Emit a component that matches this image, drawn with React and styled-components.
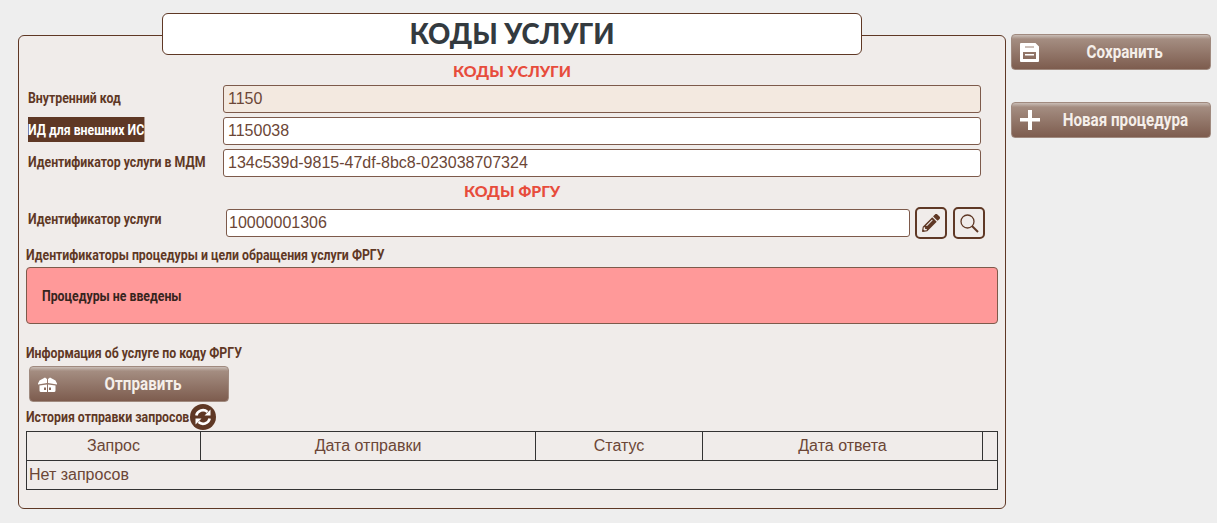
import React from "react";
import styled, { createGlobalStyle, css } from "styled-components";
import { FaPencilAlt } from "react-icons/fa";

const brown = "#5f3825";

// the page uses a condensed bold face, so Roboto gets squeezed to its width
const condensed = css`
  font: 700 15px/18px Roboto, "Liberation Sans", sans-serif;
  transform: scaleX(0.82);
  transform-origin: left center;
  white-space: nowrap;
`;

const GlobalStyle = createGlobalStyle`
  html, body {
    margin: 0;
    background: #eeeeee;
    font-family: "Liberation Sans", Arial, sans-serif;
  }
`;

const Page = styled.div`
  display: flex;
  align-items: flex-start;
  gap: 5px;
  padding: 13px 0 0 18px;
`;

const Panel = styled.section`
  box-sizing: border-box;
  width: 988px;
  height: 474px;
  margin-top: 22px;
  padding: 0 7px 0 7px;
  background: #f0ecea;
  border: 1px solid ${brown};
  border-radius: 6px;
`;

const Title = styled.h1`
  box-sizing: border-box;
  width: 700px;
  height: 42px;
  margin: -23px 0 0 136px;
  background: #fff;
  border: 1px solid ${brown};
  border-radius: 6px;
  color: #333a3f;
  font: 900 27.5px/40px Lato, sans-serif;
  text-align: center;
`;

const SectionHead = styled.h2`
  margin: ${(p) => p.$top}px 0 5px;
  color: #e74c3c;
  font: 900 15.8px/18px Lato, sans-serif;
  text-align: center;
`;

const FieldRow = styled.div`
  display: grid;
  grid-template-columns: 195px 758px;
  margin: 4px 0 0 2px;
`;

const FieldLabel = styled.label`
  ${condensed}
  justify-self: start;
  align-self: start;
  padding: ${(p) => (p.$active ? "3.5px 0" : "0")};
  margin-top: ${(p) => (p.$active ? "0" : "4px")};
  background: ${(p) => (p.$active ? brown : "transparent")};
  color: ${(p) => (p.$active ? "#fff" : brown)};
`;

const TextBox = styled.div`
  box-sizing: border-box;
  height: 28px;
  padding-left: 4px;
  background: ${(p) => (p.$readonly ? "#f3e9e0" : "#fff")};
  border: 1px solid #7d5a4b;
  border-radius: 3px;
  color: #6b4636;
  font-size: 16px;
  line-height: 26px;
`;

const FrguRow = styled.div`
  display: grid;
  grid-template-columns: 198px 684px 37px 39px;
  align-items: center;
  height: 32px;
  margin: 7px 0 0 2px;
`;

const FrguLabel = styled(FieldLabel)`
  margin-top: 3px;
`;

const FrguBox = styled(TextBox)`
  padding-left: 2px;
`;

const SquareButton = styled.button`
  box-sizing: border-box;
  display: flex;
  align-items: center;
  justify-content: center;
  width: 32px;
  height: 32px;
  margin-left: ${(p) => p.$left}px;
  padding: 0;
  background: #f0ecea;
  border: 2px solid ${brown};
  border-radius: 5px;
  color: ${brown};
`;

const Caption = styled.div`
  ${condensed}
  margin-top: ${(p) => p.$top}px;
  color: ${brown};
`;

const Alert = styled.div`
  box-sizing: border-box;
  height: 57px;
  margin-top: 3px;
  padding-left: 15px;
  background: #ff9999;
  border: 1px solid #7d5a4b;
  border-radius: 4px;
  color: #35241d;
  line-height: 55px;
`;

const AlertText = styled.span`
  ${condensed}
  display: inline-block;
  line-height: 55px;
`;

const ActionButton = styled.button`
  box-sizing: border-box;
  position: relative;
  display: block;
  width: 200px;
  height: 36px;
  padding: 0 0 0 28px;
  background: linear-gradient(#c9bdb6 0, #a48d81 12%, #7d5c4e 100%);
  border: 1px solid #a08a7f;
  border-radius: 4px;
  color: #f5efea;
  text-align: center;
`;

const ButtonLabel = styled.span`
  display: inline-block;
  font: 700 19px/30px Roboto, "Liberation Sans", sans-serif;
  transform: scaleX(0.8);
  white-space: nowrap;
`;

const ButtonIcon = styled.svg`
  position: absolute;
  left: ${(p) => p.$left}px;
  top: ${(p) => p.$top}px;
`;

const SendButton = styled(ActionButton)`
  margin: 4px 0 0 3px;
`;

const HistoryRow = styled.div`
  display: flex;
  align-items: center;
  gap: 2px;
  height: 26px;
  margin-top: 2px;
  color: ${brown};
`;

const HistoryText = styled.span`
  ${condensed}
  flex: none;
  width: 162px;
`;

const RefreshBadge = styled.span`
  display: flex;
  align-items: center;
  justify-content: center;
  width: 26px;
  height: 26px;
  background: ${brown};
  border-radius: 50%;
  color: #fff;
`;

const Table = styled.table`
  box-sizing: border-box;
  width: 971px;
  margin-top: 1px;
  border-collapse: collapse;
  table-layout: fixed;
  color: #6b4636;
  font-size: 16px;
`;

const HeadCell = styled.th`
  box-sizing: border-box;
  width: ${(p) => p.$width}px;
  height: 29px;
  padding: 0;
  border: 1px solid #333;
  font-weight: 400;
  text-align: center;
`;

const BodyCell = styled.td`
  box-sizing: border-box;
  height: 29px;
  padding: 0 0 0 2px;
  border: 1px solid #333;
`;

const Sidebar = styled.aside`
  display: flex;
  flex-direction: column;
  gap: 32px;
  padding-top: 21px;
`;

const SaveIcon = () => (
  <ButtonIcon $left={8} $top={8} width="19" height="19" viewBox="0 0 19 19" fill="#fff">
    <path
      fillRule="evenodd"
      d="M1 0h14.500L19 3.500V18a1 1 0 0 1-1 1H1a1 1 0 0 1-1-1V1a1 1 0 0 1 1-1zM5 3.500v1h9v-1zM3 9v7h13V9zM5 11h9v1.500H5z"
    />
  </ButtonIcon>
);

const PlusIcon = () => (
  <ButtonIcon $left={8} $top={7} width="20" height="20" viewBox="0 0 20 20" fill="#fff">
    <path d="M8 0h4v8h8v3.500h-8V20H8v-8.500H0V8h8z" />
  </ButtonIcon>
);

const BoxIcon = () => (
  <ButtonIcon $left={8} $top={10} width="19" height="15" viewBox="0 0 19 15" fill="#fff">
    <path d="M1.500 3.500L7 .5l2 1.500v4L0 7.500v-1zM17.500 3.500L12 .5l-2 1.500v4l9 1.500v-1zM1.500 8.500L9 7.500V15H3a1.500 1.500 0 0 1-1.500-1.500zM17.500 8.500L10 7.500V15h6a1.500 1.500 0 0 0 1.500-1.500z" />
    <path d="M6 10.500h2v2.500H6zM11 10.500h2v2.500h-2z" fill="#8a6c5e" />
  </ButtonIcon>
);

const SearchIcon = () => (
  <svg width="21" height="21" viewBox="0 0 21 21" fill="none" stroke={brown}>
    <circle cx="8.500" cy="8.500" r="6.500" strokeWidth="1.300" />
    <path d="M13 13l6 6" strokeWidth="2" />
  </svg>
);

const RefreshIcon = () => (
  <svg width="18" height="18" viewBox="0 0 18 18" fill="none" stroke="#fff" strokeWidth="2.600">
    <path d="M2.300 7.500A6.800 6.800 0 0 1 13.500 4" />
    <path d="M15.700 10.500A6.800 6.800 0 0 1 4.500 14" />
    <path d="M16.500 1.500v6h-6zM1.500 16.500v-6h6z" fill="#fff" stroke="none" />
  </svg>
);

const headers = [
  ["Запрос", 174],
  ["Дата отправки", 335],
  ["Статус", 167],
  ["Дата ответа", 280],
  ["", 15],
];

const App = () => (
  <Page>
    <GlobalStyle />
    <div>
      <Panel>
        <Title>КОДЫ УСЛУГИ</Title>
        <SectionHead $top={7}>КОДЫ УСЛУГИ</SectionHead>
        <FieldRow>
          <FieldLabel>Внутренний код</FieldLabel>
          <TextBox $readonly>1150</TextBox>
        </FieldRow>
        <FieldRow>
          <FieldLabel $active>ИД для внешних ИС</FieldLabel>
          <TextBox>1150038</TextBox>
        </FieldRow>
        <FieldRow>
          <FieldLabel>Идентификатор услуги в МДМ</FieldLabel>
          <TextBox>134c539d-9815-47df-8bc8-023038707324</TextBox>
        </FieldRow>
        <SectionHead $top={5}>КОДЫ ФРГУ</SectionHead>
        <FrguRow>
          <FrguLabel>Идентификатор услуги</FrguLabel>
          <FrguBox>10000001306</FrguBox>
          <SquareButton $left={5}>
            <FaPencilAlt size={18} />
          </SquareButton>
          <SquareButton $left={6}>
            <SearchIcon />
          </SquareButton>
        </FrguRow>
        <Caption $top={7}>Идентификаторы процедуры и цели обращения услуги ФРГУ</Caption>
        <Alert>
          <AlertText>Процедуры не введены</AlertText>
        </Alert>
        <Caption $top={20}>Информация об услуге по коду ФРГУ</Caption>
        <SendButton>
          <BoxIcon />
          <ButtonLabel>Отправить</ButtonLabel>
        </SendButton>
        <HistoryRow>
          <HistoryText>История отправки запросов</HistoryText>
          <RefreshBadge>
            <RefreshIcon />
          </RefreshBadge>
        </HistoryRow>
        <Table>
          <thead>
            <tr>
              {headers.map(([name, width]) => (
                <HeadCell key={width} $width={width}>
                  {name}
                </HeadCell>
              ))}
            </tr>
          </thead>
          <tbody>
            <tr>
              <BodyCell colSpan={5}>Нет запросов</BodyCell>
            </tr>
          </tbody>
        </Table>
      </Panel>
    </div>
    <Sidebar>
      <ActionButton>
        <SaveIcon />
        <ButtonLabel>Сохранить</ButtonLabel>
      </ActionButton>
      <ActionButton>
        <PlusIcon />
        <ButtonLabel>Новая процедура</ButtonLabel>
      </ActionButton>
    </Sidebar>
  </Page>
);

export default App;
